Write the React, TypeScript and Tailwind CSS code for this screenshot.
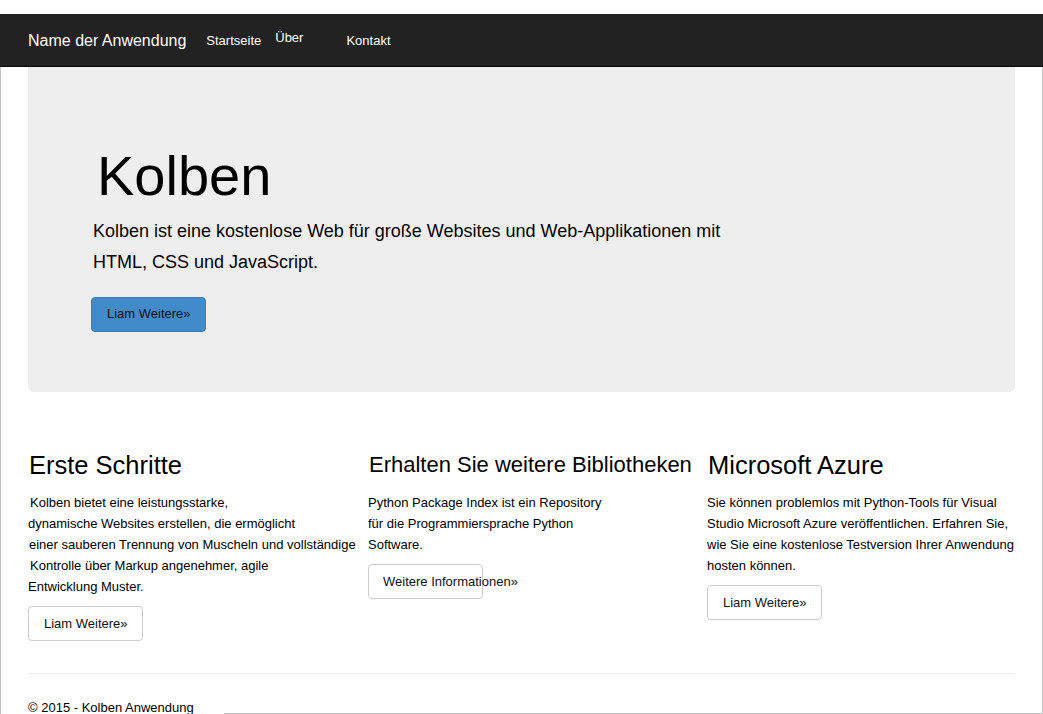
import React from "react";

const font = { fontFamily: '"Liberation Sans", Arial, sans-serif' };

function Btn({ children, primary, pl = "pl-[15px]" }: { children: React.ReactNode; primary?: boolean; pl?: string }) {
  return (
    <div
      className={
        "w-[115px] h-[35px] rounded-[4px] border flex items-center whitespace-nowrap text-[13px] text-[#111] " +
        pl +
        " " +
        (primary ? "bg-[#428bca] border-[#357ebd]" : "bg-white border-[#ccc]")
      }
    >
      {children}
    </div>
  );
}

export default function App() {
  return (
    <div className="w-[1043px] h-[714px] bg-white overflow-hidden relative text-black" style={font}>
      <div className="h-[14px]" />
      <nav className="h-[53px] bg-[#222] border-b border-[#080808] flex items-center pl-[28px] text-white">
        <span className="text-[16px] leading-none pt-[1px]">Name der Anwendung</span>
        <span className="text-[13px] leading-none ml-[20px] pt-[1px]">Startseite</span>
        <span className="text-[13px] leading-none ml-[14px] mb-[5px]">Über</span>
        <span className="text-[13px] leading-none ml-[43px] pt-[1px]">Kontakt</span>
      </nav>
      <div className="h-[647px] border-l border-r border-[#c4c4c4] px-[27px] flex flex-col">
        <div className="h-[325px] shrink-0 bg-[#eee] rounded-b-[6px] pl-[63px] pt-[78px] flex flex-col items-start">
          <h1 className="text-[56px] leading-[1.1] ml-[6px]">Kolben</h1>
          <p className="text-[18px] leading-[31px] mt-[9px] ml-[2px] whitespace-nowrap">
            Kolben ist eine kostenlose Web für große Websites und Web-Applikationen mit
            <br />
            HTML, CSS und JavaScript.
          </p>
          <div className="mt-[19px]">
            <Btn primary>Liam Weitere»</Btn>
          </div>
        </div>
        <div className="grid grid-cols-[340px_339px_1fr] mt-[60px] shrink-0">
          <div className="flex flex-col items-start">
            <h2 className="text-[25.5px] leading-[26px] ml-[1px] whitespace-nowrap">Erste Schritte</h2>
            <p className="text-[13px] leading-[21px] mt-[14px] whitespace-nowrap">
              <span className="ml-[2px]">Kolben bietet eine leistungsstarke,</span>
              <br />
              dynamische Websites erstellen, die ermöglicht
              <br />
              <span className="ml-[1px]">einer sauberen Trennung von Muscheln und vollständige</span>
              <br />
              <span className="ml-[2px]">Kontrolle über Markup angenehmer, agile</span>
              <br />
              Entwicklung Muster.
            </p>
            <div className="mt-[9px]">
              <Btn>Liam Weitere»</Btn>
            </div>
          </div>
          <div className="flex flex-col items-start">
            <h2 className="text-[22px] leading-[26px] ml-[1px] whitespace-nowrap">Erhalten Sie weitere Bibliotheken</h2>
            <p className="text-[13px] leading-[21px] mt-[14px] whitespace-nowrap">
              Python Package Index ist ein Repository
              <br />
              für die Programmiersprache Python
              <br />
              Software.
            </p>
            <div className="mt-[9px]">
              <Btn pl="pl-[14px]">Weitere Informationen»</Btn>
            </div>
          </div>
          <div className="flex flex-col items-start">
            <h2 className="text-[25.5px] leading-[26px] ml-[1px] whitespace-nowrap">Microsoft Azure</h2>
            <p className="text-[13px] leading-[21px] mt-[14px] whitespace-nowrap">
              Sie können problemlos mit Python-Tools für Visual
              <br />
              Studio Microsoft Azure veröffentlichen. Erfahren Sie,
              <br />
              wie Sie eine kostenlose Testversion Ihrer Anwendung
              <br />
              hosten können.
            </p>
            <div className="mt-[9px]">
              <Btn>Liam Weitere»</Btn>
            </div>
          </div>
        </div>
        <hr className="mt-[32px] shrink-0 border-t border-[#eee]" />
        <footer className="mt-[23px] shrink-0 text-[13px] leading-[21px] whitespace-nowrap">© 2015 - Kolben Anwendung</footer>
      </div>
      <div className="absolute bottom-0 left-[224px] right-0 h-px bg-[#c4c4c4]" />
    </div>
  );
}
